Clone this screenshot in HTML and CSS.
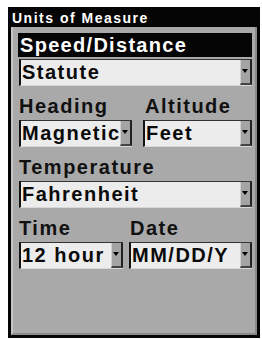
FILE: index.html
```html
<!DOCTYPE html>
<html lang="en">
<head>
  <meta charset="UTF-8">
  <title>Units of Measure</title>
  <link rel="stylesheet" href="styles.css">
</head>
<body>
  <div class="screen">
    <div class="title-bar">Units of Measure</div>
    <div class="panel">
      <div class="field">
        <div class="label selected">Speed/Distance</div>
        <div class="dropdown"><span class="value">Statute</span><span class="arrow"></span></div>
      </div>

      <div class="row heading-row">
        <div class="field col-left">
          <div class="label">Heading</div>
          <div class="dropdown"><span class="value">Magnetic</span><span class="arrow"></span></div>
        </div>
        <div class="field col-right">
          <div class="label">Altitude</div>
          <div class="dropdown"><span class="value">Feet</span><span class="arrow"></span></div>
        </div>
      </div>

      <div class="field">
        <div class="label">Temperature</div>
        <div class="dropdown"><span class="value">Fahrenheit</span><span class="arrow"></span></div>
      </div>

      <div class="row time-row">
        <div class="field col-left">
          <div class="label">Time</div>
          <div class="dropdown"><span class="value">12 hour</span><span class="arrow"></span></div>
        </div>
        <div class="field col-right">
          <div class="label">Date</div>
          <div class="dropdown"><span class="value">MM/DD/Y</span><span class="arrow"></span></div>
        </div>
      </div>
    </div>
  </div>
</body>
</html>
```

FILE: styles.css
```css
* {
  box-sizing: border-box;
}
body {
  margin: 0;
  background: #fff;
  font-family: 'Liberation Sans', Arial, sans-serif;
  font-weight: bold;
}

.screen {
  margin: 7px 0 0 8px;
  width: 252px;
  height: 331px;
  border: 3px solid #050505;
  background: #a9a9a9;
  display: flex;
  flex-direction: column;
}

.title-bar {
  height: 17px;
  background: #050505;
  color: #fff;
  font-size: 14px;
  letter-spacing: 1.5px;
  line-height: 17px;
  padding-left: 1px;
}

.panel {
  flex: 1;
  border-left: 2px solid #c4c4c4;
  border-right: 2px solid #8a8a8a;
  border-bottom: 2px solid #8a8a8a;
  padding: 6px 3px 0 5px;
  display: flex;
  flex-direction: column;
}

.field {
  display: flex;
  flex-direction: column;
}

.label {
  font-size: 20px;
  letter-spacing: 1.5px;
  line-height: 22px;
  color: #111;
  padding-left: 1px;
  margin-bottom: 3px;
  white-space: nowrap;
}

.label.selected {
  background: #050505;
  color: #fff;
  height: 24px;
  line-height: 25px;
  letter-spacing: 1.3px;
  padding-left: 2px;
  margin-bottom: 2px;
}

.dropdown {
  height: 27px;
  display: flex;
  align-items: stretch;
  background: #ececec;
  border-top: 1px solid #333;
  border-left: 2px solid #111;
  border-bottom: 1px solid #d8d8d8;
  margin-left: 1px;
  margin-bottom: 9px;
  overflow: hidden;
}

.value {
  flex: 1;
  font-size: 20px;
  letter-spacing: 1.5px;
  line-height: 25px;
  color: #0a0a0a;
  padding-left: 1px;
  white-space: nowrap;
  overflow: hidden;
}

.arrow {
  width: 12px;
  flex-shrink: 0;
  background: #a4a4a4;
  border-right: 2px solid #222;
  border-bottom: 2px solid #444;
  border-left: 1px solid #d0d0d0;
  position: relative;
}

.arrow::after {
  content: "";
  position: absolute;
  left: 1px;
  top: 9px;
  border-left: 3.5px solid transparent;
  border-right: 3.5px solid transparent;
  border-top: 4px solid #000;
}

.row {
  display: flex;
}

.heading-row .col-left {
  width: 114px;
  margin-right: 10px;
}
.heading-row .col-right {
  flex: 1;
}
.heading-row .col-right .label {
  padding-left: 3px;
}

.time-row .col-left {
  width: 105px;
  margin-right: 5px;
}
.time-row .col-right {
  flex: 1;
}
.time-row .col-right .label {
  padding-left: 2px;
}
```
